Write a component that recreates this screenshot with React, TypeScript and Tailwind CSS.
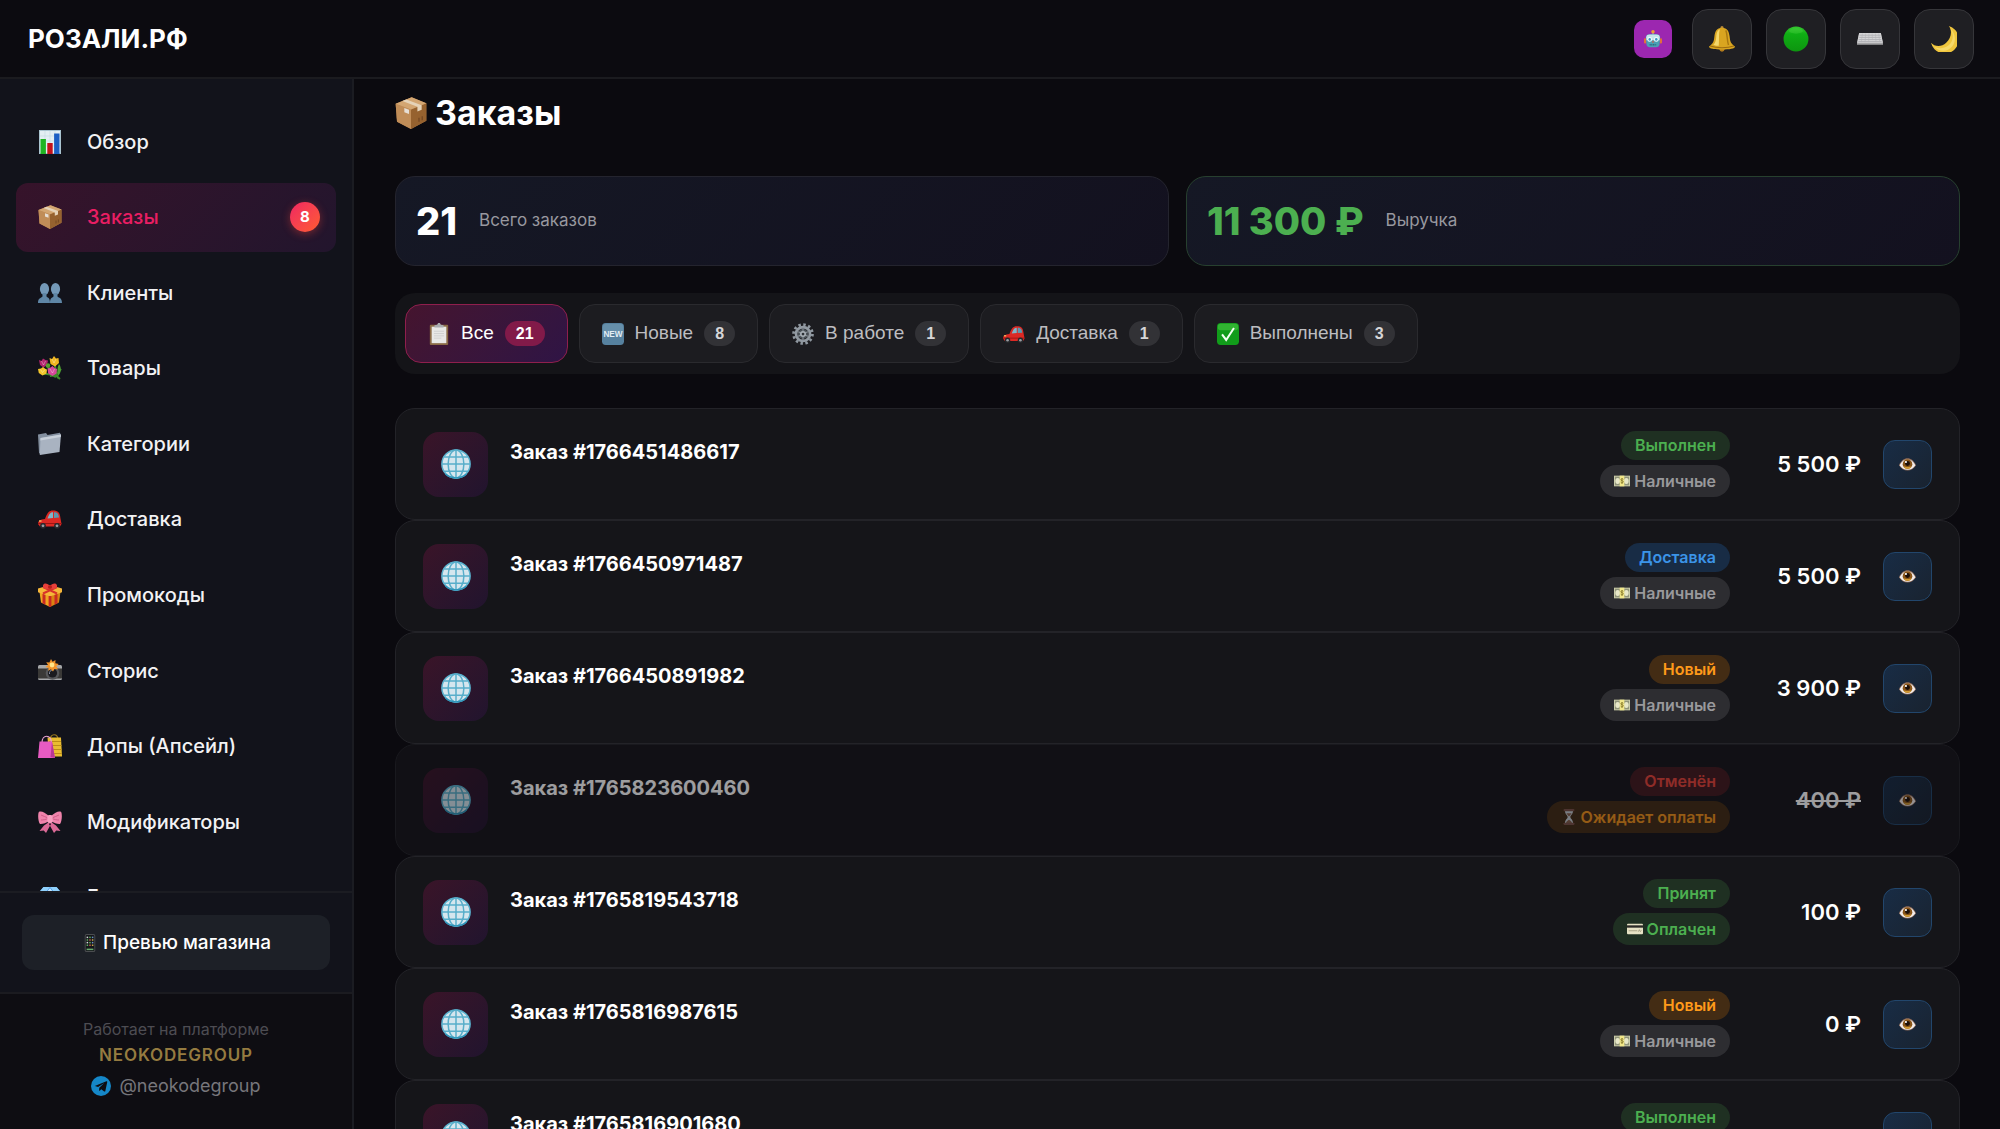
import { useState } from "react";
import type { ReactNode } from "react";

type IconName =
  | "chart" | "box" | "people" | "flowers" | "folder" | "car" | "gift" | "camera" | "bags" | "bow" | "gem"
  | "phone" | "robot" | "bell" | "online" | "keyboard" | "moon" | "clipboard" | "new" | "gear" | "check"
  | "globe" | "cash" | "hourglass" | "card" | "eye" | "telegram";

// All drawings share a 24x24 grid
const ICONS: Record<IconName, ReactNode> = {
  chart: (
    <>
      <rect x="1" y="0" width="22" height="24" fill="#a9c3cf" />
      <rect x="2" y="1" width="20" height="22" fill="#e3eef3" />
      <path d="M2 6h20M2 11h20M2 16h20M7 1v22M12 1v22M17 1v22" stroke="#c3d8e2" strokeWidth=".6" />
      <rect x="2.500" y="9" width="5.400" height="15" fill="#1fb322" />
      <rect x="9.300" y="13" width="5.400" height="11" fill="#c4121b" />
      <rect x="16.100" y="3.500" width="5.400" height="20.500" fill="#1c5fc4" />
    </>
  ),
  box: (
    <>
      <path d="M.5 5 12.5.2 23.5 4.600v13.200L12 24 1.500 18.600z" fill="#b07c48" />
      <path d="M.5 5 12 9.300V24L1.500 18.600z" fill="#c08d58" />
      <path d="M12 9.300 23.500 4.600v13.200L12 24z" fill="#96622f" />
      <path d="M.5 5 12.500.2 23.500 4.600 12 9.300z" fill="#d3a672" />
      <path d="m5.500 3 3-1.200 11.500 4.300v3.400l-3.200 1.300V7.400z" fill="#e5d3b8" />
      <path d="m7 8.200 3.500 1.300v3.300L7 11.500z" fill="#e6ded4" />
      <path d="M18 15.500v3m2.400-4v3" stroke="#6d4320" strokeWidth=".8" />
    </>
  ),
  people: (
    <g fill="#5f86a6">
      <ellipse cx="6.500" cy="8" rx="4.600" ry="6" fill="#7499b8" />
      <path d="M4.500 12h4v3.500c1.500 1.500 3.500 1.200 3.500 6.500H0c0-5.300 3-4.800 4.500-6.500z" />
      <ellipse cx="17.500" cy="8" rx="4.600" ry="6" fill="#7499b8" />
      <path d="M15.500 12h4v3.500C21 17 24 16.700 24 22H12c0-5.300 2-5 3.500-6.500z" />
    </g>
  ),
  flowers: (
    <>
      <path d="M7 8c4 4 9 10 15 15M12 20c4 0 7-1 11-7M4 18c6-1 10 1 14 3M17 9c0 5 1 9 3 13" stroke="#3c8b2a" strokeWidth="2" fill="none" />
      <path d="M21 8c3 4 2 9-1 12-1-5-1-8 1-12z" fill="#4fa331" />
      <path d="m1 4 2.500 1L5 2.500 7.500 4 10 4.500 9 9l-3.500 2.500L2 9z" fill="#b3246f" />
      <path d="M11.500 2 14 3l2-3 2 2.500 2.500-.5.500 5-4 3.500L12.500 8z" fill="#f0b721" />
      <path d="m0 13 3-.5 2-1.500 2.500 2 1.500.5-.5 4-4 2L.8 17z" fill="#f3c52b" />
      <path d="m9.500 12.500 3-1 2-1.500 2 2 2.500 1-.5 4.500-4 2.500-4.300-2.500z" fill="#d6499b" />
      <circle cx="10" cy="9.500" r="2.200" fill="#57a02f" />
      <path d="m14 3 2 4 2-4M3.500 5l2 4L7.500 5M12 13l2.500 4 2-4M2.500 13.500l2 3 2.500-3" stroke="#fff" strokeOpacity=".35" fill="none" />
    </>
  ),
  folder: (
    <>
      <path d="M0 2.500 8 1l1.500 2L22 .8l1 3.200L3 22.500 1 21z" fill="#8490a0" />
      <path d="m2.500 6 20.500-3.500L21.500 20 1.800 23z" fill="#a9b3c1" />
      <path d="m2.500 6 20.500-3.500-.2 2.500L2.300 8.500z" fill="#c8d0da" />
    </>
  ),
  car: (
    <>
      <path d="M7 12C9 6 11 3.500 15 3.500c5 0 7 2 7.500 8l1 5.500-1.500 2.500H2L0 17c0-3 2-4.500 7-5z" fill="#dc2924" />
      <path d="M9.500 11.500C11 7 12.500 5.200 15 5.200V11z" fill="#7fb6c9" />
      <path d="M16 5.200c3.600 0 4.500 1.600 5 5.300l-5 .5z" fill="#5e98ae" />
      <path d="M0 16.500h23.500" stroke="#9c1512" strokeWidth="1" />
      <circle cx="5" cy="18.800" r="2.900" fill="#26282c" />
      <circle cx="19" cy="18.800" r="2.900" fill="#26282c" />
      <circle cx="5" cy="18.800" r="1.400" fill="#9a9da3" />
      <circle cx="19" cy="18.800" r="1.400" fill="#9a9da3" />
      <path d="M1 14h2.500" stroke="#ffd76b" strokeWidth="1.200" />
    </>
  ),
  gift: (
    <>
      <path d="m1.500 9 10.500 4v11L3 19.500z" fill="#f0a422" />
      <path d="M22.500 9 12 13v11l9-4.500z" fill="#d98412" />
      <path d="M0 5.500 12 2l12 3.500v3.800L12 13.500 0 9.300z" fill="#f6b73a" />
      <path d="m4.500 10.800 3 1.100v9.800l-3-1.500zM19.500 10.800l-3 1.100v9.800l3-1.500zM10.600 13h2.800v10.300L12 24l-1.400-.7z" fill="#c92a22" />
      <path d="m5 4 14 6.500M19 4 5 10.500" stroke="#d9322a" strokeWidth="2" />
      <path d="M12 5C8 7.500 4.500 5.500 5 2.500 6-1 10 .5 12 3c2-2.500 6-4 7-.5.500 3-3 5-7 2.500z" fill="#e8403a" />
      <circle cx="12" cy="4" r="2" fill="#b81f1b" />
    </>
  ),
  camera: (
    <>
      <rect x="0" y="6" width="24" height="15" rx="1.500" fill="#a6a8aa" />
      <rect x="0" y="9.500" width="24" height="10" fill="#3a3937" />
      <circle cx="14.500" cy="14" r="6.800" fill="#57585a" />
      <circle cx="14.500" cy="14" r="4.600" fill="#1b1b1f" />
      <path d="M11.500 15a3.200 3.200 0 0 1 3-4" stroke="#8a93a8" fill="none" />
      <path d="m13 0 1.600 2.700L17.500 1l-.2 3.200 3.500.8-2.600 2.200 1.800 3-3.500-.3L15 12.500l-2-2.300-2.700 1.600.2-3L7.500 8l2.500-2-1.800-2.800 3.200.3z" fill="#f2952b" />
      <circle cx="14" cy="6" r="2.400" fill="#ffe68a" />
    </>
  ),
  bags: (
    <>
      <path d="M12 6c0-7 8-7 8 0" stroke="#9b7a1d" strokeWidth="1.200" fill="none" />
      <path d="M9.500 3.500H23l1 19H11z" fill="#e9bd31" />
      <path d="M11 7.500h12M11 11.500h12.500M11 15.500h12.700M12 19.500h12" stroke="#bd8e18" strokeWidth="1" />
      <path d="M4 9c0-9 9-9 9.500 0" stroke="#e9a2d4" strokeWidth="1.200" fill="none" />
      <path d="M1.500 7.500H14L17 24H0z" fill="#e75bc2" />
      <path d="M14 7.500 17 24l-4.500-1z" fill="#b93994" />
    </>
  ),
  bow: (
    <>
      <path d="M11 12 6 15.500 1.500 21l4.200-.6L8 23l5-9zM13 12l5 3.500 4.500 5.500-4.200-.6L16 23l-5-9z" fill="#db6a97" />
      <path d="M11 6C7 2.500 3 .5.800 2-.5 5 .3 12 2 14c3 .2 6-1 9-3zM13 6c4-3.500 8-5.500 10.200-4 1.300 3 .5 10-1.200 12-3 .2-6-1-9-3z" fill="#ef83ab" />
      <path d="M3 5c2 1 5 2 7 3M3 10c2 0 5-.5 7-1.500M21 5c-2 1-5 2-7 3M21 10c-2 0-5-.5-7-1.500" stroke="#c95481" strokeWidth=".8" fill="none" />
      <rect x="9.300" y="5" width="5.400" height="8" rx="2" fill="#f7a0c0" />
    </>
  ),
  gem: (
    <>
      <path d="M5.500 2h13L24 8.500 12 23 0 8.500z" fill="#4fa8f0" />
      <path d="M5.500 2h13L24 8.500H0z" fill="#8fd0fb" />
      <path d="m7 8.500 5-6.500 5 6.500L12 23z" fill="#3c8ee6" />
      <path d="m8 8 4-5 4 5z" fill="#bfe5ff" />
    </>
  ),
  phone: (
    <>
      <rect x="5" y="0" width="14" height="24" rx="2.500" fill="#4b4d50" />
      <rect x="6.200" y="1.200" width="11.600" height="21.600" rx="1.500" fill="#15171b" />
      {[3.5, 7, 10.5, 14].map((y, i) => (
        <g key={y}>
          <rect x="7.500" y={y} width="2" height="2" fill={i % 2 ? "#5fae62" : "#d9dbe0"} />
          <rect x="11" y={y} width="2" height="2" fill={i % 2 ? "#c85a4e" : "#58b25c"} />
          <rect x="14.500" y={y} width="2" height="2" fill={i % 2 ? "#c9a94b" : "#6c93c9"} />
        </g>
      ))}
      <rect x="7.500" y="19.500" width="9" height="2" fill="#67ad6d" />
    </>
  ),
  robot: (
    <>
      <path d="M12 2v5" stroke="#8fb5bd" strokeWidth="1.500" />
      <circle cx="12" cy="2.300" r="2.300" fill="#f0a233" />
      <rect x="0" y="11" width="3" height="7" rx="1.300" fill="#e0703c" />
      <rect x="21" y="11" width="3" height="7" rx="1.300" fill="#e0703c" />
      <path d="M2.500 10c0-3 2-4.500 5-4.500h9c3 0 5 1.500 5 4.500l-.8 9c-.3 2.800-2 4-4.500 4H7.800c-2.500 0-4.200-1.200-4.500-4z" fill="#4aa0b4" />
      <path d="M3 9.500C3 7 5 6 7.500 6h9C19 6 21 7 21 9.500l-.3 4H3.300z" fill="#c6e6ec" />
      <circle cx="7.600" cy="12.500" r="3.100" fill="#f1fbff" />
      <circle cx="16.400" cy="12.500" r="3.100" fill="#f1fbff" />
      <circle cx="7.600" cy="12.500" r="1.700" fill="#3c9cc0" />
      <circle cx="16.400" cy="12.500" r="1.700" fill="#3c9cc0" />
      <path d="m12 13.500 1.400 3h-2.800z" fill="#e0533c" />
      <path d="M7.500 19.500h9" stroke="#2b6c82" strokeWidth="2" strokeDasharray="1.500 .7" />
    </>
  ),
  bell: (
    <>
      <circle cx="12" cy="1.500" r="1.500" fill="#b98a3a" />
      <circle cx="12" cy="21.500" r="2.300" fill="#b47c1c" />
      <path d="M12 1.500c5 0 6.500 3.500 7 8 .5 5 1 6.500 5 9.500 0 2-5 2.800-12 2.800S0 21 0 19c4-3 4.500-4.500 5-9.500.500-4.500 2-8 7-8z" fill="#d9a520" />
      <path d="M10 3c-2.500 1-3 4-3.300 7-.2 3-.7 5.500-2.700 7.500 1.500.5 3.500.8 5 .8C9.500 13 8.800 7 10 3z" fill="#f6d869" />
      <path d="M15.500 4c1.500 3 1 9 2.500 13.500" stroke="#a87710" strokeWidth="1.300" fill="none" />
      <path d="M1 18.500c6 2 16 2 22 0" stroke="#9c6c10" fill="none" />
    </>
  ),
  online: (
    <>
      <defs>
        <linearGradient id="onlineFill" x1="0" y1="0" x2="0" y2="1">
          <stop offset="0" stopColor="#35c92f" />
          <stop offset=".3" stopColor="#0fae14" />
          <stop offset="1" stopColor="#0d950f" />
        </linearGradient>
      </defs>
      <circle cx="12" cy="12" r="11.500" fill="url(#onlineFill)" />
      <ellipse cx="12" cy="4.500" rx="6.500" ry="2.600" fill="#5fdc55" fillOpacity=".25" />
    </>
  ),
  keyboard: (
    <>
      <path d="M2 6.500h20l2 9.500v1.200H0V16z" fill="#a3a3a5" />
      <path d="M2 6.500h20l1.900 9H.1z" fill="#d5d5d7" />
      <path d="M2.400 8.500h19.200M2 10.500h20M1.500 12.500h21M1.200 14.300h21.600" stroke="#a3a3a7" strokeWidth=".6" />
      <path d="M5 7 4 15M8 7l-.6 8M11 7l-.2 8M14 7l.2 6M17 7l.6 8M20 7l1 8" stroke="#b2b2b6" strokeWidth=".5" />
    </>
  ),
  moon: (
    <>
      <path d="M16.500 0A13 13 0 1 1 0 15.500c3 3.500 9.500 4.500 14 0S20 5 16.500 0z" fill="#f0c63d" />
      <path d="M18 2.500c3.500 6 2.500 12-2 15.500-4.500 3.500-10.500 3-14 .5C7 24 15 24.500 19.500 19S22 6 18 2.500z" fill="#f7da6a" />
    </>
  ),
  clipboard: (
    <>
      <rect x="2" y="2" width="20" height="22" rx="1" fill="#8a6a45" />
      <rect x="4" y="4" width="16" height="18" fill="#e8e8e6" />
      <path d="M6.500 9h11M6.500 11.500h11M6.500 14h11M6.500 16.500h8" stroke="#c9c9c8" strokeWidth=".8" />
      <path d="M7 2.500 10 2l1-2h2l1 2 3 .5V5H7z" fill="#a9acaf" />
    </>
  ),
  new: (
    <>
      <rect x="0" y="0" width="24" height="24" rx="4" fill="#56819f" />
      <rect x="1" y="1" width="22" height="9" rx="3" fill="#7199b3" fillOpacity=".6" />
      <text x="12" y="15.500" textAnchor="middle" fontSize="9" fontWeight="700" fill="#e2edf4">NEW</text>
    </>
  ),
  gear: (
    <>
      <circle cx="12" cy="12" r="10.300" fill="none" stroke="#8f979f" strokeWidth="3" strokeDasharray="2.700 2.693" />
      <circle cx="12" cy="12" r="7.600" fill="none" stroke="#929aa2" strokeWidth="3" />
      <circle cx="12" cy="12" r="5.500" fill="#4a5157" />
      <path d="M12 5v14M5.500 9l13 6M5.500 15l13-6" stroke="#868e96" strokeWidth="1.200" />
      <circle cx="12" cy="12" r="3.300" fill="#a7aeb5" />
      <circle cx="12" cy="12" r="1.500" fill="#2b3035" />
    </>
  ),
  check: (
    <>
      <rect x="0" y="0" width="24" height="24" rx="4" fill="#119c1a" />
      <rect x="1" y=".8" width="22" height="7" rx="3" fill="#3fbd3c" fillOpacity=".7" />
      <path d="m5.500 12.500 4.500 6L18.500 5.500" stroke="#f3fff2" strokeWidth="2.200" fill="none" />
    </>
  ),
  globe: (
    <>
      <circle cx="12" cy="12" r="11.300" fill="#d5e6ee" stroke="#58b1ce" strokeWidth="1.200" />
      <path d="M12 .7v22.600M.7 12h22.600M2.500 6.300h19M2.500 17.700h19" stroke="#58aeca" strokeWidth="1.200" />
      <ellipse cx="12" cy="12" rx="6.300" ry="11.300" fill="none" stroke="#58aeca" strokeWidth="1.200" />
      <path d="M3.500 20C8 24 16 24 20.500 20" stroke="#2e93b8" strokeWidth="1" fill="none" />
    </>
  ),
  cash: (
    <>
      <rect x="0" y="4" width="24" height="16" fill="#c9cba8" />
      <rect x="1.500" y="5.500" width="21" height="13" fill="#8f9379" />
      <ellipse cx="5.500" cy="12" rx="3.500" ry="4.500" fill="#e7e7c8" />
      <ellipse cx="18.500" cy="12" rx="3.500" ry="4.500" fill="#e7e7c8" />
      <rect x="8.500" y="4" width="7" height="16" fill="#f1e78a" />
      <path d="M14 9.500c-.5-1-3.800-1.200-3.800.7s3.800.8 3.800 2.900-3.500 1.900-4 .6M12 7.500v9" stroke="#7d6d1e" strokeWidth="1.100" fill="none" />
    </>
  ),
  hourglass: (
    <>
      <path d="M6 3h12c0 5-4 6.500-4 9s4 4 4 9H6c0-5 4-6.500 4-9S6 8 6 3z" fill="#c5ccd2" />
      <path d="M8 6.500h8L12.500 11h-1zM7.500 21c.5-3 3-4 4.500-5 1.500 1 4 2 4.500 5z" fill="#86604c" />
      <rect x="4" y="0" width="16" height="3.500" rx="1" fill="#7a5046" />
      <rect x="4" y="20.500" width="16" height="3.500" rx="1" fill="#7a5046" />
    </>
  ),
  card: (
    <>
      <rect x="0" y="4" width="24" height="16" rx="1.500" fill="#e6e2c4" />
      <rect x="0" y="6.500" width="24" height="3.500" fill="#2b2a26" />
      <path d="M2.500 14.500h13" stroke="#b9b496" strokeWidth="2" />
      <path d="m17 16 1.500-3 1.500 3 1.500-2" stroke="#8b8668" fill="none" />
    </>
  ),
  eye: (
    <>
      <path d="M0 13C3 6 7 3 12 3s9 3 12 10c-3 5-7 7.500-12 7.500S3 18 0 13z" fill="#8d6a58" />
      <path d="M.8 13C3.500 7.500 7.500 5 12 5s8.500 2.500 11.200 8c-3 4.500-6.700 6.500-11.200 6.500S3.800 17.500.8 13z" fill="#f1eceb" />
      <circle cx="12" cy="11.500" r="6.800" fill="#8a5518" />
      <path d="M6 14a6.500 6.500 0 0 0 12 0c-3 2-9 2-12 0z" fill="#d29a33" />
      <circle cx="12" cy="10.500" r="3.500" fill="#1d0f07" />
      <circle cx="9.800" cy="8.500" r="1.500" fill="#fff" />
    </>
  ),
  telegram: (
    <>
      <circle cx="12" cy="12" r="12" fill="#1587c8" />
      <path d="M4.500 12 18.500 6.300c.7-.3 1.200.2 1 1L17.200 18c-.2.800-.8.900-1.400.5l-3.500-2.600-1.800 1.700c-.4.400-.8.200-.8-.3l.2-3.300 6-5.500-7.400 4.700-3.700-1.200z" fill="#0e0d12" />
    </>
  ),
};

function Icon({ name, className }: { name: IconName; className: string }) {
  return (
    <svg viewBox="0 0 24 24" className={`shrink-0 ${className}`} aria-hidden="true">
      {ICONS[name]}
    </svg>
  );
}

const NAV: { icon: IconName; label: string; badge?: number }[] = [
  { icon: "chart", label: "Обзор" },
  { icon: "box", label: "Заказы", badge: 8 },
  { icon: "people", label: "Клиенты" },
  { icon: "flowers", label: "Товары" },
  { icon: "folder", label: "Категории" },
  { icon: "car", label: "Доставка" },
  { icon: "gift", label: "Промокоды" },
  { icon: "camera", label: "Сторис" },
  { icon: "bags", label: "Допы (Апсейл)" },
  { icon: "bow", label: "Модификаторы" },
  { icon: "gem", label: "Бонусы" },
];

const TABS: { icon: IconName; label: string; count: number }[] = [
  { icon: "clipboard", label: "Все", count: 21 },
  { icon: "new", label: "Новые", count: 8 },
  { icon: "gear", label: "В работе", count: 1 },
  { icon: "car", label: "Доставка", count: 1 },
  { icon: "check", label: "Выполнены", count: 3 },
];

const STATUS = {
  "Выполнен": "bg-[#1f3022] text-[#4caf50]",
  "Принят": "bg-[#1f3022] text-[#4caf50]",
  "Доставка": "bg-[#182c45] text-[#3b94e8]",
  "Новый": "bg-[#432c14] text-[#ff9a1a]",
  "Отменён": "bg-[#421a1e] text-[#e8443a]",
};

const PAYMENT: Record<string, { icon: IconName; style: string }> = {
  "Наличные": { icon: "cash", style: "bg-[#2d2d31] text-[#99999c]" },
  "Оплачен": { icon: "card", style: "bg-[#1f3022] text-[#4caf50]" },
  "Ожидает оплаты": { icon: "hourglass", style: "bg-[#432c14] text-[#f0921a]" },
};

type Order = { id: string; status: keyof typeof STATUS; payment: string; price: string };

const ORDERS: Order[] = [
  { id: "1766451486617", status: "Выполнен", payment: "Наличные", price: "5 500 ₽" },
  { id: "1766450971487", status: "Доставка", payment: "Наличные", price: "5 500 ₽" },
  { id: "1766450891982", status: "Новый", payment: "Наличные", price: "3 900 ₽" },
  { id: "1765823600460", status: "Отменён", payment: "Ожидает оплаты", price: "400 ₽" },
  { id: "1765819543718", status: "Принят", payment: "Оплачен", price: "100 ₽" },
  { id: "1765816987615", status: "Новый", payment: "Наличные", price: "0 ₽" },
  { id: "1765816901680", status: "Выполнен", payment: "Наличные", price: "" },
];

const HEADER_BUTTONS: { icon: IconName; label: string }[] = [
  { icon: "bell", label: "Уведомления" },
  { icon: "online", label: "Статус" },
  { icon: "keyboard", label: "Горячие клавиши" },
  { icon: "moon", label: "Тема" },
];

function Header() {
  return (
    <header className="flex h-[79px] shrink-0 items-center border-b-2 border-[#1b1b1f] bg-[#0c0b10] pr-[26px] pl-7">
      <div className="text-[26px] leading-8 font-bold">РОЗАЛИ.РФ</div>
      <div className="ml-auto flex items-center gap-[14px]">
        <button aria-label="Бот" className="mr-[6px] grid size-[38px] place-items-center rounded-[10px] bg-[#9c27b0]">
          <Icon name="robot" className="size-[18px]" />
        </button>
        {HEADER_BUTTONS.map((b) => (
          <button
            key={b.icon}
            aria-label={b.label}
            className="grid size-[60px] place-items-center rounded-2xl border border-[#36363a] bg-[#1f1f23]"
          >
            <Icon name={b.icon} className="size-[26px]" />
          </button>
        ))}
      </div>
    </header>
  );
}

function Sidebar() {
  return (
    <aside className="flex w-[354px] shrink-0 flex-col border-r-2 border-[#1b1c22] bg-[#12131b]">
      <nav className="min-h-0 flex-1 overflow-hidden px-4 pt-7">
        <div className="grid h-[825px] auto-rows-fr gap-[6px]">
          {NAV.map((n) => (
            <a
              key={n.label}
              href="#"
              className={`flex items-center gap-[25px] rounded-xl pr-4 pl-[22px] text-[20px] leading-7 font-medium ${
                n.badge ? "bg-linear-135 from-[#36132a] to-[#22152d] text-[#e91e63]" : "text-[#f2f2f4]"
              }`}
            >
              <Icon name={n.icon} className="size-6" />
              {n.label}
              {n.badge && (
                <span className="ml-auto grid size-[30px] place-items-center rounded-full bg-linear-135 from-[#f02360] to-[#ff5a2c] text-[15px] font-bold text-white shadow-[0_2px_8px_rgba(244,67,54,0.4)]">
                  {n.badge}
                </span>
              )}
            </a>
          ))}
        </div>
      </nav>
      <div className="border-t-2 border-[#1b1c22] px-[22px] pt-[22px] pb-[22px]">
        <button className="flex h-[55px] w-full items-center justify-center gap-1 rounded-xl bg-[#1d2027] text-[19px] leading-6 font-medium">
          <Icon name="phone" className="size-[18px]" />
          Превью магазина
        </button>
      </div>
      <footer className="flex flex-col items-center border-t-2 border-[#1b1b20] bg-[#0e0d12] pt-[23px] pb-[31px] leading-6">
        <div className="text-[16px] text-[#4d4c52]">Работает на платформе</div>
        <div className="mt-[2px] text-[17px] font-semibold tracking-wider text-[#957b40]">NEOKODEGROUP</div>
        <a href="#" className="mt-[7px] flex items-center gap-2 text-[18px] text-[#77767b]">
          <Icon name="telegram" className="size-5" />
          @neokodegroup
        </a>
      </footer>
    </aside>
  );
}

function OrderRow({ order }: { order: Order }) {
  const cancelled = order.status === "Отменён";
  const payment = PAYMENT[order.payment];

  return (
    <li
      className={`flex items-center gap-[22px] rounded-[20px] border border-[#232328] bg-[#151519] px-[27px] py-[22px] ${
        cancelled ? "opacity-60" : ""
      }`}
    >
      <div className="grid size-[65px] place-items-center rounded-2xl bg-linear-135 from-[#3a1428] to-[#21142e]">
        <Icon name="globe" className="size-[30px]" />
      </div>
      <h2 className="mt-[6px] flex-1 self-start text-[20px] leading-[30px] font-bold">Заказ #{order.id}</h2>
      <div className="flex flex-col items-end gap-[5px] text-[16px] font-semibold">
        <span className={`rounded-full px-[14px] leading-[29px] ${STATUS[order.status]}`}>{order.status}</span>
        <span className={`flex items-center gap-1 rounded-full px-[14px] leading-8 ${payment.style}`}>
          <Icon name={payment.icon} className="size-4" />
          {order.payment}
        </span>
      </div>
      <div className={`w-[109px] text-right text-[22px] leading-8 font-semibold ${cancelled ? "line-through" : ""}`}>
        {order.price}
      </div>
      <button
        aria-label={`Открыть заказ ${order.id}`}
        className="grid size-[49px] place-items-center rounded-xl border border-[#22466c] bg-linear-135 from-[#182c45] to-[#192330]"
      >
        <Icon name="eye" className="size-[17px]" />
      </button>
    </li>
  );
}

export default function App() {
  const [tab, setTab] = useState("Все");

  return (
    <div className="flex h-screen flex-col overflow-hidden bg-[#0b0a0f] font-['Inter',sans-serif] text-white">
      <Header />
      <div className="flex min-h-0 flex-1">
        <Sidebar />
        <main className="min-w-0 flex-1 overflow-hidden pt-[14px] pr-10 pl-[41px]">
          <h1 className="flex items-center gap-2 text-[34px] leading-10 font-bold">
            <Icon name="box" className="size-8" />
            Заказы
          </h1>

          <section className="mt-[43px] grid grid-cols-2 gap-[17px]">
            <div className="flex h-[90px] items-center gap-[22px] rounded-[20px] border border-[#24242e] bg-linear-135 from-[#151825] to-[#13111f] px-5">
              <span className="text-[38px] leading-[48px] font-extrabold">21</span>
              <span className="text-[17px] text-[#98989f]">Всего заказов</span>
            </div>
            <div className="flex h-[90px] items-center gap-[22px] rounded-[20px] border border-[#27402f] bg-linear-135 from-[#151825] to-[#13111f] px-5">
              <span className="text-[38px] leading-[48px] font-extrabold text-[#4caf50]">11 300 ₽</span>
              <span className="text-[17px] text-[#98989f]">Выручка</span>
            </div>
          </section>

          <div className="mt-[27px] flex gap-[11px] rounded-[20px] bg-[#141418] py-[11px] px-[10px] font-['Liberation_Sans',sans-serif]">
            {TABS.map((t) => (
              <button
                key={t.label}
                onClick={() => setTab(t.label)}
                className={`flex h-[59px] items-center gap-[11px] rounded-2xl border px-[22px] text-[19px] ${
                  tab === t.label
                    ? "border-[#8f1f4d] bg-linear-135 from-[#45142e] to-[#2f1445] text-white"
                    : "border-[#2a2a2e] bg-[#1c1c20] text-[#bdbdc0]"
                }`}
              >
                <Icon name={t.icon} className="size-[22px]" />
                {t.label}
                <span
                  className={`rounded-full px-[11px] text-[16px] leading-[25px] font-bold ${
                    tab === t.label ? "bg-[#821a49]" : "bg-[#323236] text-[#d6d6d8]"
                  }`}
                >
                  {t.count}
                </span>
              </button>
            ))}
          </div>

          <ul className="mt-[34px]">
            {ORDERS.map((o) => (
              <OrderRow key={o.id} order={o} />
            ))}
          </ul>
        </main>
      </div>
    </div>
  );
}
